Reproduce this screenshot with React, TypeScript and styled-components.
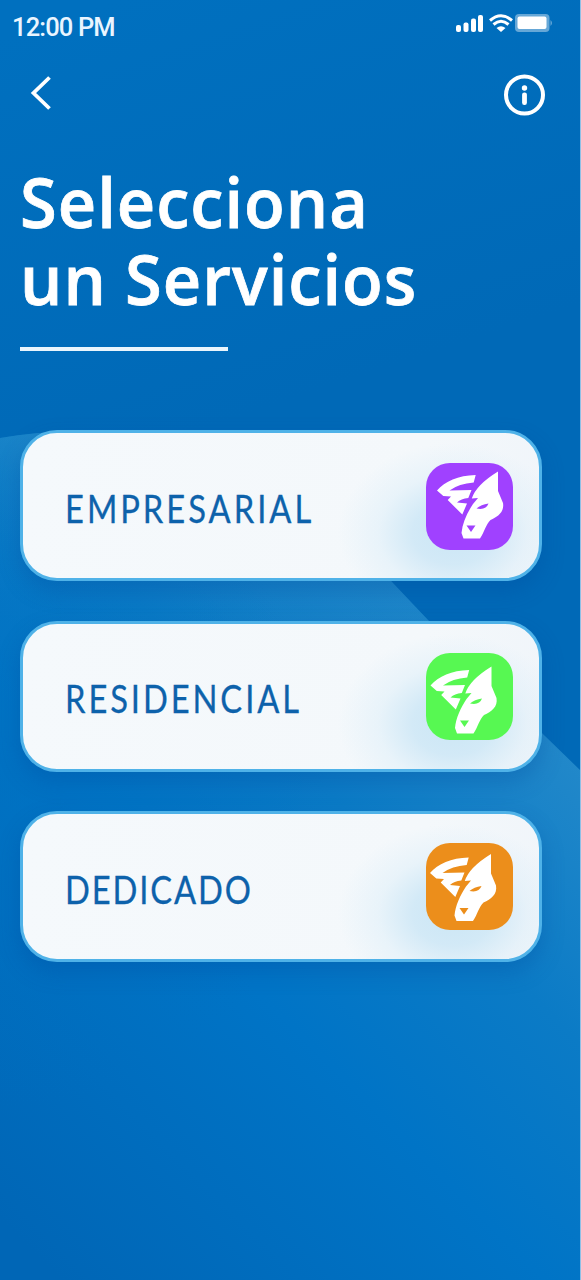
import React from 'react';
import styled, { createGlobalStyle } from 'styled-components';

const GlobalStyle = createGlobalStyle`
  * { box-sizing: border-box; }
  body { margin: 0; background: #0070bf; }
`;

const Screen = styled.main`
  position: relative;
  isolation: isolate;
  width: 581px;
  height: 1280px;
  overflow: hidden;
  display: flex;
  flex-direction: column;
  border-right: 1px solid #8fc0e6;
  font-family: 'Trebuchet MS', 'Open Sans', sans-serif;
  color: #fff;
`;

const Backdrop = styled.svg`
  position: absolute;
  inset: 0;
  z-index: -1;
`;

const StatusBar = styled.header`
  display: flex;
  justify-content: space-between;
  align-items: flex-start;
  height: 70px;
  padding: 11px 26px 0 12px;
`;

const Clock = styled.span`
  font: 500 25.5px/32px Roboto, sans-serif;
  letter-spacing: -0.85px;
  color: #eaf5ff;
`;

const StatusIcons = styled.svg`
  display: block;
`;

const NavBar = styled.nav`
  display: flex;
  justify-content: space-between;
  padding: 3px 35px 0 30px;
  height: 93px;
`;

const IconButton = styled.button`
  display: block;
  padding: 0;
  border: 0;
  background: none;
  height: 44px;
  color: #fff;
`;

const Title = styled.h1`
  margin: 0 0 0 20px;
  font-size: 69.5px;
  line-height: 77px;
  font-weight: 600;
  transform: scaleX(0.96);
  transform-origin: left;
  -webkit-text-stroke: 0.8px #fff;
`;

const TitleLine = styled.span`
  display: block;
  white-space: nowrap;
  letter-spacing: 1.05px;
`;

const Rule = styled.div`
  width: 208px;
  height: 4px;
  margin: 30px 0 0 20px;
  background: #e9f5fd;
`;

const CardList = styled.div`
  display: flex;
  flex-direction: column;
  gap: 39.5px;
  margin: 79px 38px 0 20px;
`;

const Card = styled.button`
  display: flex;
  align-items: center;
  justify-content: space-between;
  height: 151px;
  padding: 0 26px 0 42px;
  border: 3px solid #4fb2e8;
  border-radius: 37px;
  background:
    radial-gradient(
      ellipse 115px 90px at 430px 100px,
      #cbe6f5 0%,
      rgba(205, 231, 246, 0.85) 35%,
      rgba(215, 236, 248, 0.4) 65%,
      rgba(230, 242, 250, 0) 100%
    ),
    linear-gradient(100deg, #f5f9fc 0%, #f4f8fb 75%, #f0f5fa 100%);
  box-shadow: 0 10px 22px rgba(0, 70, 150, 0.28);
  text-align: left;
`;

const Label = styled.span<{ $tracking: number }>`
  padding-top: 4px;
  font: 400 38px/50px 'Trebuchet MS', Lato, sans-serif;
  letter-spacing: ${(p) => p.$tracking}px;
  color: #0d62ab;
  white-space: nowrap;
  transform: scaleX(0.86);
  transform-origin: left;
  -webkit-text-stroke: 0.3px #0d62ab;
`;

const Badge = styled.span<{ $color: string; $drop: number }>`
  flex: none;
  width: 87px;
  height: 87px;
  margin-top: ${(p) => p.$drop}px;
  border-radius: 24px;
  background: ${(p) => p.$color};
  color: ${(p) => p.$color};
`;

interface Service {
  name: string;
  color: string;
  tracking: number;
  drop: number;
  dx: number;
  dy: number;
}

const services: Service[] = [
  { name: 'EMPRESARIAL', color: '#a041ff', tracking: 3.5, drop: 2, dx: 0, dy: 0 },
  { name: 'RESIDENCIAL', color: '#57f852', tracking: 3.4, drop: 1, dx: -6.5, dy: 5 },
  { name: 'DEDICADO', color: '#ec8e1b', tracking: 2.2, drop: 0, dx: -7, dy: 2.5 },
];

function HorseLogo({ dx, dy }: { dx: number; dy: number }) {
  return (
    <svg width="87" height="87" viewBox="0 0 87 87" display="block">
      <g transform={`translate(${dx} ${dy})`}>
        <path
          fill="#fff"
          d="M49.700 12C32 12.500 19 18.500 11 27.500L17.300 33L25 33.500L21.700 37L36.300 51.500L41 40.500L31 39.500Q35 35.500 42.300 35L45.500 27L23.500 27.500Q33 20.500 47.700 19.500Z"
        />
        <path
          fill="#fff"
          d="M72 8.500L72 28L77 40C78.500 49 72 53.500 64.500 57C60 61 58.500 69 54 75.500L37.500 75.500L35.500 70C36.500 60 41 50 47 41L52 35L45.800 35.500Q50 22 72 8.500Z"
        />
        <path fill="currentColor" d="M50.500 45.500Q55 41.500 62.500 40.500Q60 47.500 50.500 45.500Z" />
        <path fill="currentColor" d="M40.500 62.500L49.500 62.500L45 69Z" />
      </g>
    </svg>
  );
}

export default function App() {
  return (
    <>
      <GlobalStyle />
      <Screen>
        <Backdrop width="581" height="1280" viewBox="0 0 581 1280" aria-hidden="true">
          <defs>
            <linearGradient id="sky" x1="0.2" y1="0" x2="0.35" y2="1">
              <stop offset="0" stopColor="#0070bf" />
              <stop offset="0.35" stopColor="#0069b7" />
              <stop offset="1" stopColor="#0069b7" />
            </linearGradient>
            <linearGradient id="wave" gradientUnits="userSpaceOnUse" x1="560" y1="700" x2="20" y2="1240">
              <stop offset="0" stopColor="#258aca" />
              <stop offset="0.3" stopColor="#0b7bc6" />
              <stop offset="0.55" stopColor="#0074c6" />
              <stop offset="1" stopColor="#0066b6" />
            </linearGradient>
            <linearGradient id="crest" gradientUnits="userSpaceOnUse" x1="0" y1="430" x2="-40" y2="620">
              <stop offset="0" stopColor="#258bca" />
              <stop offset="1" stopColor="#0076c4" stopOpacity="0" />
            </linearGradient>
            <radialGradient id="fade" gradientUnits="userSpaceOnUse" cx="0" cy="780" r="330">
              <stop offset="0" stopColor="#0070c0" stopOpacity="0.6" />
              <stop offset="1" stopColor="#0070c0" stopOpacity="0" />
            </radialGradient>
          </defs>
          <rect width="581" height="1280" fill="url(#sky)" />
          <path d="M0 438C150 412 300 470 392 582L428 620L545 736L581 771V1280H0Z" fill="url(#wave)" />
          <path d="M0 438C150 412 300 470 392 582L428 620L480 672L200 900L0 720Z" fill="url(#crest)" opacity="0.5" />
          <path d="M0 438C150 412 300 470 392 582V1110H0Z" fill="url(#fade)" />
        </Backdrop>
        <StatusBar>
          <Clock>12:00 PM</Clock>
          <StatusIcons width="98" height="26" viewBox="0 0 98 26" fill="#fff">
            <rect x="0" y="14" width="5" height="7" rx="2" />
            <rect x="7.500" y="11.500" width="5" height="9.500" rx="2" />
            <rect x="15" y="7.500" width="5" height="13.500" rx="2" />
            <rect x="22" y="4" width="5" height="17" rx="2" />
            <g fill="none" stroke="#fff" strokeWidth="3">
              <path d="M34 9.500Q45 0 56 9.500" />
              <path d="M37.500 13.500Q45 7 52.500 13.500" />
            </g>
            <path d="M40.500 17Q45 13.500 49.500 17L45 21Z" />
            <rect x="59" y="3" width="34.500" height="18" rx="4" opacity="0.4" />
            <rect x="61.500" y="5.500" width="29" height="12.500" rx="2" />
            <path d="M94.500 9Q97.500 12 94.500 15Z" opacity="0.4" />
          </StatusIcons>
        </StatusBar>
        <NavBar>
          <IconButton aria-label="Volver">
            <svg width="24" height="42" viewBox="0 0 24 42" fill="none" stroke="currentColor" strokeWidth="3.800">
              <path d="M19.500 4.500L3.500 20L19.500 35.500" />
            </svg>
          </IconButton>
          <IconButton aria-label="Información">
            <svg width="42" height="44" viewBox="0 0 42 44">
              <circle cx="21.500" cy="22" r="18.500" fill="none" stroke="currentColor" strokeWidth="4" />
              <circle cx="21.500" cy="15" r="2.700" fill="currentColor" />
              <rect x="19.100" y="19.500" width="4.800" height="12.500" rx="2.200" fill="currentColor" />
            </svg>
          </IconButton>
        </NavBar>
        <Title>
          <TitleLine>Selecciona</TitleLine>
          <TitleLine>un Servicios</TitleLine>
        </Title>
        <Rule />
        <CardList>
          {services.map((s) => (
            <Card key={s.name}>
              <Label $tracking={s.tracking}>{s.name}</Label>
              <Badge $color={s.color} $drop={s.drop}>
                <HorseLogo dx={s.dx} dy={s.dy} />
              </Badge>
            </Card>
          ))}
        </CardList>
      </Screen>
    </>
  );
}
